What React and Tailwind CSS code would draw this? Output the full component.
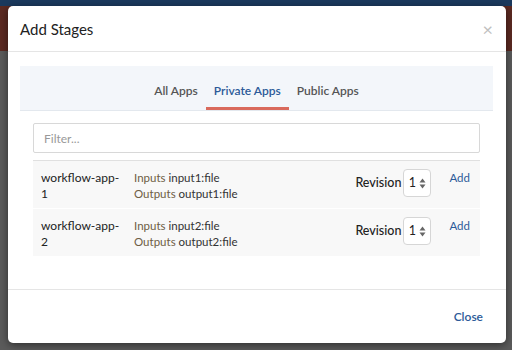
import React, { useState } from 'react';

const apps = [
  { name: 'workflow-app-1', input: 'input1:file', output: 'output1:file' },
  { name: 'workflow-app-2', input: 'input2:file', output: 'output2:file' },
];

const tabs = ['All Apps', 'Private Apps', 'Public Apps'];

const Spinner = () => (
  <svg width="7" height="11" viewBox="0 0 7 11" className="ml-[3px]">
    <path d="M3.5 0.5 L6.5 4.5 L0.5 4.5 Z" fill="#666" />
    <path d="M3.5 10.5 L6.5 6.5 L0.5 6.5 Z" fill="#666" />
  </svg>
);

const App = () => {
  const [active, setActive] = useState('Private Apps');
  const [filter, setFilter] = useState('');

  return (
    <div className="relative w-[512px] h-[350px] overflow-hidden bg-[#5a5a5a]" style={{ fontFamily: 'Lato, "Open Sans", sans-serif' }}>
      <div className="absolute inset-x-0 top-0 h-[6px] bg-[#1b3a5e]" />
      <div className="absolute inset-x-0 top-[6px] h-[45px] bg-[#5c2a22]" />
      <div className="absolute inset-x-0 top-[51px] bottom-0 bg-[#5b5b5b]" />

      <div className="absolute left-[8px] top-[6px] w-[498px] h-[337px] bg-white rounded-[5px] shadow-[0_2px_8px_rgba(0,0,0,0.5)] flex flex-col">
        <div className="h-[46px] flex items-center justify-between pl-[12px] pr-[13px] border-b border-[#e5e5e5]">
          <h1 className="text-[15px] text-[#222] leading-none pt-[1px]">Add Stages</h1>
          <span className="text-[18px] text-[#c0c0c0] leading-none">×</span>
        </div>

        <div className="pt-[14px] pl-[12px] pr-[13px] flex-1">
          <div className="bg-[#f3f6fa] h-[45px] flex justify-center items-end border-b border-[#e3e8ee]">
            {tabs.map((t) => (
              <button
                key={t}
                onClick={() => setActive(t)}
                className={`px-[8px] text-[12px] font-semibold leading-[14px] pb-[9px] border-b-[3px] ${active === t ? 'text-[#2c5a98] border-[#d96a5c]' : 'text-[#555] border-transparent'}`}
              >
                {t}
              </button>
            ))}
          </div>

          <div className="px-[13px] pt-[12px]">
            <input
              value={filter}
              onChange={(e) => setFilter(e.target.value)}
              placeholder="Filter..."
              className="w-[447px] h-[30px] border border-[#d8d8d8] rounded-[2px] px-[10px] text-[12px] text-[#333] placeholder-[#999] outline-none"
            />

            <div className="mt-[7px] w-[447px] border-t border-[#e0e0e0]">
              {apps.map((a, i) => (
                <div key={a.name} className={`flex items-start bg-[#f8f8f8] pl-[8px] pr-[10px] pt-[9px] pb-[6px] ${i > 0 ? 'border-t border-[#ffffff]' : ''}`}>
                  <div className="w-[93px] text-[12px] leading-[16px] text-[#222]">
                    workflow-app-
                    <br />
                    {a.name.slice(-1)}
                  </div>
                  <div className="flex-1 text-[11.5px] leading-[16px]">
                    <div><span className="text-[#6e5d44]">Inputs</span> <span className="text-[#333]">{a.input}</span></div>
                    <div><span className="text-[#6e5d44]">Outputs</span> <span className="text-[#333]">{a.output}</span></div>
                  </div>
                  <div className="flex items-center -mt-[1px]">
                    <span className="text-[12.5px] text-[#222] font-medium mr-[2px]">Revision</span>
                    <div className="w-[28px] h-[28px] border border-[#d6d6d6] rounded-[4px] bg-white flex items-center justify-center text-[12.5px] text-[#222]">
                      1<Spinner />
                    </div>
                  </div>
                  <a className="ml-[18px] text-[11.5px] text-[#2c5a98] leading-none pt-[2px]">Add</a>
                </div>
              ))}
            </div>
          </div>
        </div>

        <div className="h-[54px] border-t border-[#e5e5e5] flex items-center justify-end pr-[23px]">
          <button className="text-[12px] font-semibold text-[#2c5a98]">Close</button>
        </div>
      </div>
    </div>
  );
};

export default App;
